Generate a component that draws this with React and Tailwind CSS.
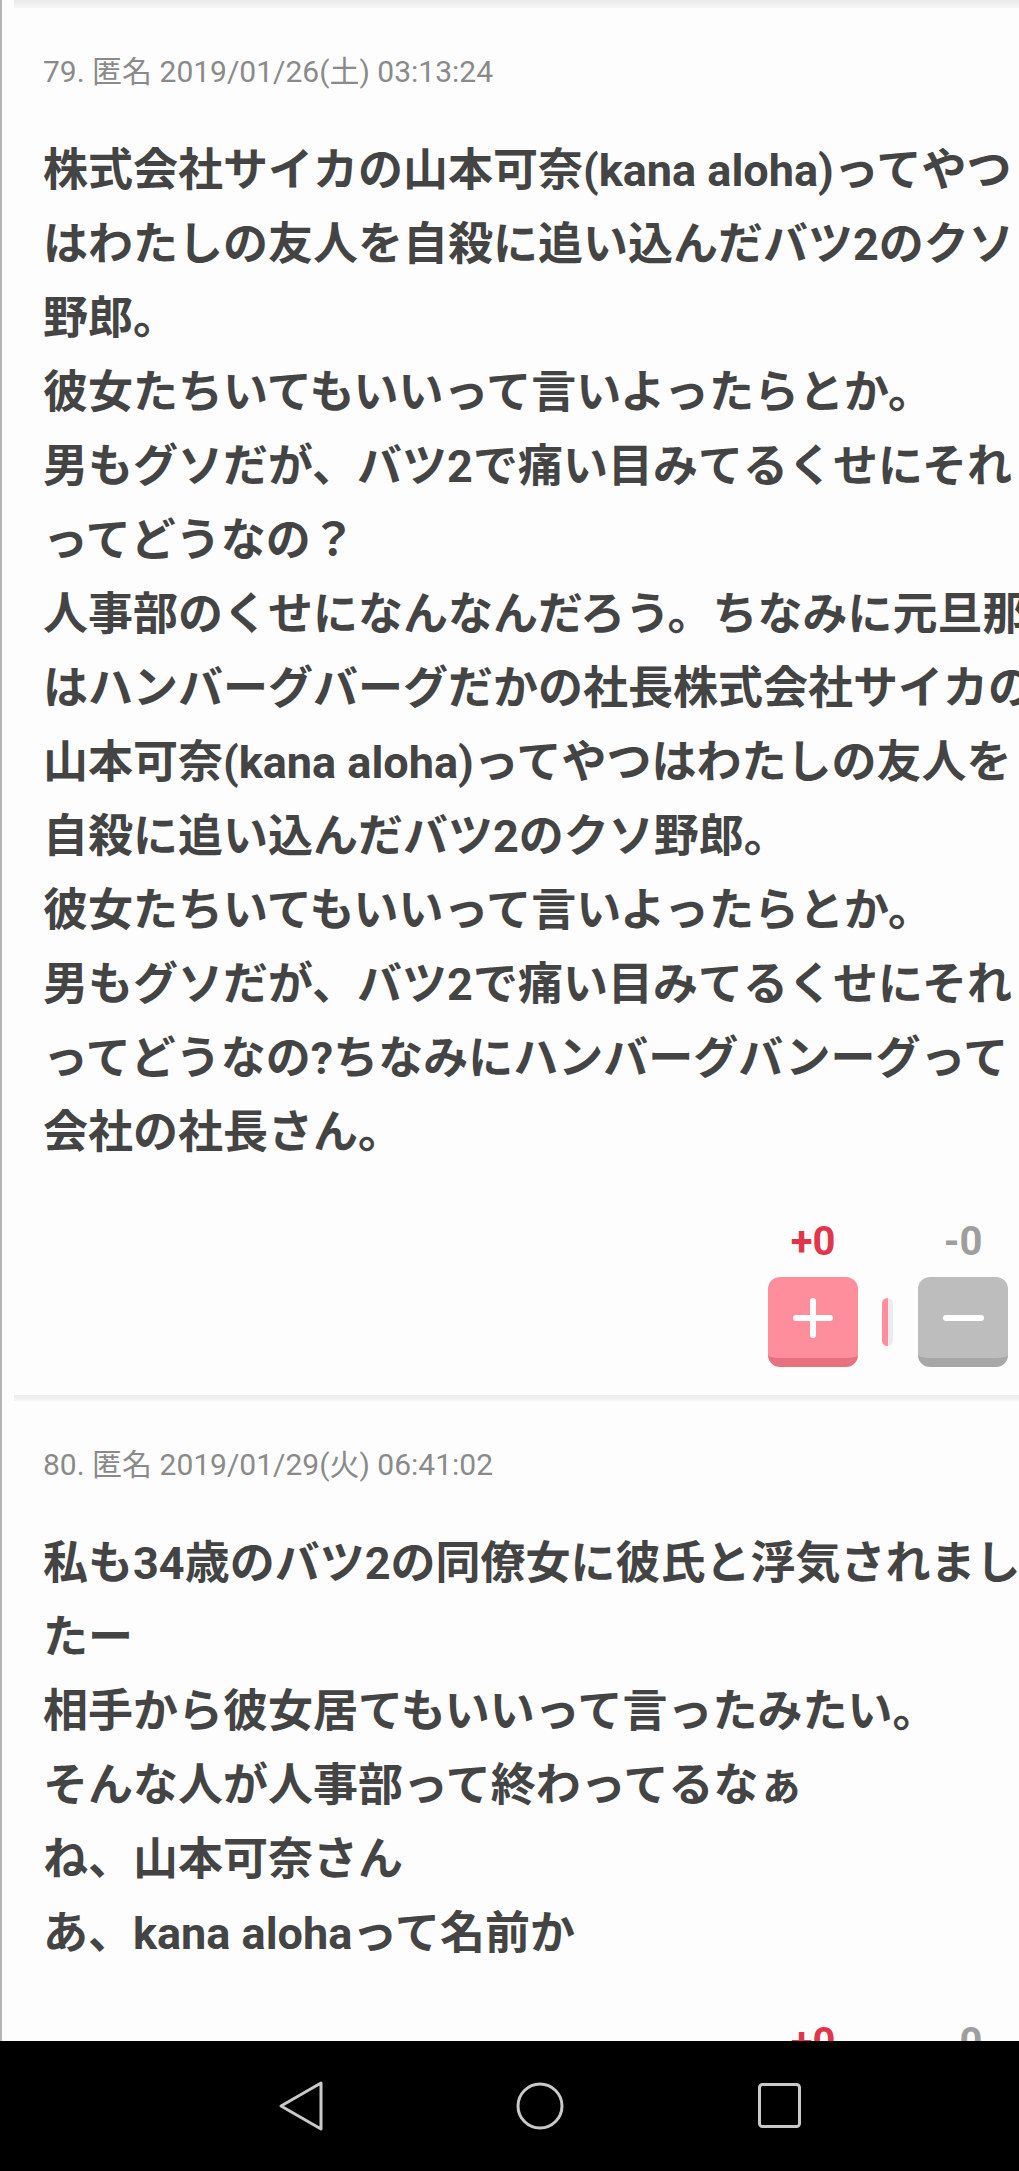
import React from 'react';

const posts = [
    {
        no: 79,
        date: '2019/01/26(土) 03:13:24',
        lines: [
            '株式会社サイカの山本可奈(kana aloha)ってやつ',
            'はわたしの友人を自殺に追い込んだバツ2のクソ',
            '野郎。',
            '彼女たちいてもいいって言いよったらとか。',
            '男もグソだが、バツ2で痛い目みてるくせにそれ',
            'ってどうなの？',
            '人事部のくせになんなんだろう。ちなみに元旦那',
            'はハンバーグバーグだかの社長株式会社サイカの',
            '山本可奈(kana aloha)ってやつはわたしの友人を',
            '自殺に追い込んだバツ2のクソ野郎。',
            '彼女たちいてもいいって言いよったらとか。',
            '男もグソだが、バツ2で痛い目みてるくせにそれ',
            'ってどうなの?ちなみにハンバーグバンーグって',
            '会社の社長さん。',
        ],
    },
    {
        no: 80,
        date: '2019/01/29(火) 06:41:02',
        lines: [
            '私も34歳のバツ2の同僚女に彼氏と浮気されまし',
            'たー',
            '相手から彼女居てもいいって言ったみたい。',
            'そんな人が人事部って終わってるなぁ',
            'ね、山本可奈さん',
            'あ、kana alohaって名前か',
        ],
    },
];

const VoteBox = () => (
    <div className="mt-[50px] flex flex-col items-end">
        {/* Counts */}
        <div className="flex items-center">
            <div className="w-[90px] text-center text-[40px] leading-[44px] font-bold text-[#e2354c]">+0</div>
            <div className="w-[60px]" />
            <div className="w-[90px] text-center text-[40px] leading-[44px] font-bold text-[#9e9e9e]">-0</div>
        </div>

        {/* Buttons */}
        <div className="mt-[13px] flex items-center">
            <button className="w-[90px] h-[90px] rounded-[12px] bg-[#ff8e9c] border-b-[9px] border-[#e7717f] flex items-center justify-center">
                <span className="relative w-[40px] h-[40px]">
                    <span className="absolute left-0 top-[17px] w-[40px] h-[6px] rounded-sm bg-white" />
                    <span className="absolute top-0 left-[17px] w-[6px] h-[40px] rounded-sm bg-white" />
                </span>
            </button>
            <div className="ml-[24px] mr-[25px] w-[11px] h-[48px] rounded-full overflow-hidden flex">
                <div className="w-[6px] bg-[#ff8e9c]" />
                <div className="flex-1 bg-[#ececec]" />
            </div>
            <button className="w-[90px] h-[90px] rounded-[12px] bg-[#bdbdbd] border-b-[9px] border-[#a7a7a7] flex items-center justify-center">
                <span className="w-[41px] h-[6px] rounded-sm bg-white" />
            </button>
        </div>
    </div>
);

const Post = ({ post }) => (
    <div>
        <div className="pl-[29px] pr-[11px] pt-[44px] pb-[28px] overflow-hidden">
            <div className="text-[30px] leading-[40px] text-[#8a8a8a] whitespace-nowrap">
                {post.no}. 匿名 {post.date}
            </div>
            <div className="mt-[42px] text-[45px] leading-[74px] font-bold text-[#444444]">
                {post.lines.map((line, i) => (
                    <div key={i} className="whitespace-nowrap">{line}</div>
                ))}
            </div>
            <VoteBox />
        </div>
        <div className="h-[6px] bg-gradient-to-b from-[#ebebeb] to-[#f5f5f5]" />
    </div>
);

const NavBar = () => (
    <div className="h-[130px] shrink-0 bg-black flex items-center pl-[277px] gap-[191px]">
        <svg width="48" height="52" viewBox="0 0 48 52" fill="none" stroke="#c9c9c9" strokeWidth="3" strokeLinejoin="round">
            <path d="M44 3 L4 26 L44 49 Z" />
        </svg>
        <svg width="48" height="52" viewBox="0 0 48 52" fill="none" stroke="#c9c9c9" strokeWidth="3">
            <circle cx="24" cy="26" r="22" />
        </svg>
        <svg width="48" height="52" viewBox="0 0 48 52" fill="none" stroke="#c9c9c9" strokeWidth="3">
            <rect x="4.5" y="4.5" width="40" height="42" rx="3" />
        </svg>
    </div>
);

export default function App() {
    return (
        <div className="w-[1019px] h-[2171px] flex flex-col bg-[#fdfdfd] font-[Roboto,'Noto_Sans_CJK_JP',sans-serif] overflow-hidden">
            <div className="flex-1 overflow-hidden border-l-[2px] border-[#b5b5b5] pl-[12px]">
                {/* Top shadow */}
                <div className="h-[8px] bg-gradient-to-b from-[#e9e9e9] to-[#f6f6f6]" />
                {posts.map((post) => (
                    <Post key={post.no} post={post} />
                ))}
            </div>
            <NavBar />
        </div>
    );
}
